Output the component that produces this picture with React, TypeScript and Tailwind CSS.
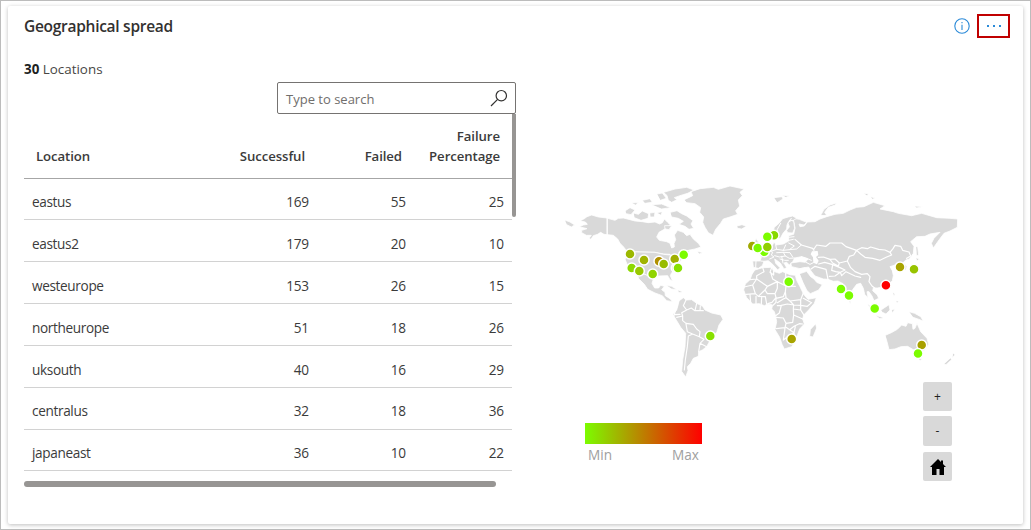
import React from "react";

type Row = { name: string; ok: number; failed: number; pct: number };

const rows: Row[] = [
  { name: "eastus", ok: 169, failed: 55, pct: 25 },
  { name: "eastus2", ok: 179, failed: 20, pct: 10 },
  { name: "westeurope", ok: 153, failed: 26, pct: 15 },
  { name: "northeurope", ok: 51, failed: 18, pct: 26 },
  { name: "uksouth", ok: 40, failed: 16, pct: 29 },
  { name: "centralus", ok: 32, failed: 18, pct: 36 },
  { name: "japaneast", ok: 36, failed: 10, pct: 22 },
];

// Map markers, painted in order: x, y, colour.
const markers: [number, number, string][] = [
  [630, 254, "#9cb800"],
  [644, 260, "#a0b400"],
  [659, 261.3, "#b09000"],
  [663.7, 264, "#98bc00"],
  [674.7, 259, "#a0b000"],
  [676.3, 268, "#e0f090"],
  [678, 268, "#88e000"],
  [683.7, 254.7, "#7cfc00"],
  [631.7, 268, "#8cd800"],
  [639.3, 271, "#98c800"],
  [652.7, 274, "#90d400"],
  [710.3, 336, "#88e000"],
  [752.3, 246, "#a0a800"],
  [764.3, 251.8, "#7cfc00"],
  [757.7, 248, "#7cf800"],
  [774, 235.3, "#88d800"],
  [767.3, 236.7, "#7cfc00"],
  [767.3, 247, "#90d000"],
  [788.7, 281.7, "#7cfc00"],
  [791.7, 339, "#a8a400"],
  [841, 289, "#7cfc00"],
  [849, 295.6, "#7cfc00"],
  [874.7, 308.6, "#7cfc00"],
  [885.9, 285.3, "#ff0000"],
  [900, 267, "#a8a400"],
  [914, 269.3, "#98c400"],
  [921.7, 345, "#a8a000"],
  [918, 353.5, "#7cfc00"],
];

function WorldMap() {
  return (
    <svg width="400" height="200" viewBox="560 180 400 200" className="block">
      <g fill="#d9d9d9" stroke="#fff" strokeWidth="2.4" strokeLinejoin="round" strokeLinecap="round">
        {/* North America */}
        <g transform="translate(555 175) scale(.33333)">
          <path d="M76 137L88 131 96 125 110 120 130 126 156 129V179L147 178 137 172 128 178 115 182 108 193 102 190 109 181 94 181 80 173 80 166 96 161 73 155 85 150 97 148 92 142Z" />
          <path d="M29 135L45 141 59 150 49 156 35 149Z" />
          <path d="M158 130L180 136 190 130 205 129 225 134 240 138 262 140 280 143 300 141 314 147 322 143 328 132 338 142 346 150 333 160 312 172 305 186 313 196 335 200 345 205 350 219 358 216 357 205 362 194 358 180 368 166 385 172 395 182 405 178 415 192 430 205 438 216 420 222 405 225 388 229 370 239 350 246 345 238 325 237 300 232 215 230 208 218 195 205 188 192 175 181 158 179Z" />
          <path d="M215 230L300 232 325 238 345 240 352 246 372 238 388 230 404 226 398 240 381 252 372 265 366 280 350 293 346 302 353 319 345 314 338 302 310 303 295 313 285 306 270 298 246 296 230 287 218 272 211 255Z" />
          <path d="M246 296L270 298 285 306 295 313 291 325 299 339 311 339 317 331 328 334 320 344 330 352 331 362 345 371 353 380 335 377 322 362 300 354 278 343 268 328 252 312Z" />
          <path d="M333 331L350 334 367 344 350 342Z M368 345L384 350 372 353Z" />
          <path d="M346 112L366 107 380 116 395 123 414 137 408 147 416 160 402 163 390 154 372 148 385 139 370 130 350 126Z" />
          <path d="M236 114L250 118 262 108 281 116 279 130 258 136 238 128Z M211 107L225 98 240 105 228 119 213 116Z" />
          <path d="M326 52L360 42 395 37 417 45 398 55 375 62 358 68 366 74 350 82 340 76 336 62Z M306 57L322 54 334 70 316 76Z" />
          <path d="M262 76L285 71 292 82 270 85Z M230 84L250 82 242 90Z M290 89L320 87 347 98 320 102Z M285 114L300 112 298 126 286 126Z M305 113L322 110 318 120Z M330 152L350 152 342 164 331 162Z" />
          <path d="M427 229L444 233 433 237Z" />
        </g>
        {/* Greenland and North Atlantic islands */}
        <g transform="translate(660 175) scale(.33333)">
          <path d="M73 74L98 62 93 50 120 41 160 37 175 43 210 33 252 42 240 52 247 62 235 75 239 93 227 107 233 118 210 126 190 132 181 146 167 163 159 181 145 173 135 157 128 142 131 126 119 112 122 98 105 86 80 83Z" />
          <path d="M231 153L246 149 259 154 245 162 233 160Z M342 68L366 65 369 72 352 83Z M366 61L390 62 378 67Z" />
        </g>
        {/* South America */}
        <g transform="translate(660 280) scale(.33333)">
          <path d="M58 62L70 53 78 60 95 59 110 70 128 79 135 90 155 99 182 105 189 118 177 135 171 155 151 180 140 200 127 210 116 215 115 229 100 235 92 250 82 260 84 272 77 291 65 274 68 240 75 200 77 160 62 142 47 117 39 103 50 90 54 76Z" />
          <path fill="none" strokeWidth="3.4" d="M78 60L70 77 80 90 65 98 68 108 50 112M80 90L94 84 104 92 130 92M110 70L105 92M121 78L120 92M68 108L68 122 78 130 100 133 110 147 120 155 118 170 132 178 120 190 140 200M78 132L82 155 98 162 118 170M98 162L85 168 82 200 76 240 73 270M120 190L116 215M52 76L42 106M45 104L60 103" />
        </g>
        {/* Europe and Asia */}
        <g transform="translate(740 175) scale(.33333)">
          <path d="M160 130L178 133 200 142 192 150 177 147 180 155 193 153 202 141 225 140 240 132 260 125 285 118 310 115 330 105 350 97 372 95 400 82 435 92 420 102 460 110 475 115 515 122 545 115 590 128 630 130 653 132 652 157 630 168 612 175 597 195 580 219 574 205 582 190 600 172 570 177 555 184 530 185 512 200 522 214 520 235 508 252 498 255 490 262 501 275 497 286 487 279 480 268 465 270 450 275 457 287 460 302 457 317 445 330 430 336 412 339 400 339 398 347 412 360 416 370 402 377 396 363 387 350 381 350 384 368 374 358 370 340 362 325 350 328 338 344 330 360 320 350 309 326 294 318 280 319 264 313 250 312 225 303 213 288 206 276 180 281 155 275 152 264 180 260 196 262 204 252 184 245 164 249 158 260 148 270 140 262 132 264 140 278 132 282 121 264 104 252 107 265 120 278 113 285 98 268 85 257 72 259 67 272 55 280 40 277 38 258 60 258 64 247 58 239 78 237 89 228 91 215 98 210 102 200 108 210 130 207 146 198 146 182 161 178 165 160Z" />
          <path d="M99 171L103 157 118 144 128 131 145 126 158 123 170 130 160 136 148 137 141 150 140 162 129 175 121 190 110 189 106 180Z M144 143L154 136 161 139 164 160 158 174 143 173 140 166 148 156Z" />
          <path d="M48 190L57 204 59 222 45 225 40 215Z M28 208L40 204 38 222 27 220Z" />
          <path d="M242 121L252 103 270 90 289 84 286 90 265 97 254 112 260 121Z" />
          <path d="M179 296L200 289 212 305 222 312 230 322 247 329 236 345 211 356 201 347 190 325Z" />
          <path stroke="none" fill="#fff" d="M216 229L233 228 235 240 228 246 236 257 231 268 220 263 219 247 212 238Z" />
          <path fill="none" strokeWidth="3.6" d="M165 193L184 210 218 220 222 226M222 222L230 210 258 214 270 204 305 204 318 215 350 226 341 240 328 244 322 258 298 264 285 252 270 253 250 246 235 247M350 226L365 218 382 221 392 216 416 223 435 225 450 232 459 221 465 211 482 214 488 226 507 231 512 243 500 250M350 226L362 237 375 247 398 250 420 256 440 246 455 240 450 232M322 258L332 278 345 290 365 298 382 296 390 305 387 320 396 333 405 340M270 253L278 264 295 273 298 264M254 262L278 269 300 278 315 285 301 292 305 302 318 290 345 303 362 307M278 269L275 286 287 290 301 292M236 267L254 262M213 282L225 274 258 283 264 313M268 304L285 303 301 292" />
          <path fill="none" strokeWidth="3" d="M122 145L112 163 114 180M154 130L148 137M90 228L98 232 94 240 102 246 89 252M107 210L110 223 95 228M110 223L130 226 137 210M130 226L148 224 163 213 146 204M110 233L130 232 136 243 118 246 104 242M136 243L148 250 164 249M130 232L150 233 158 246M148 224L170 222 184 210M146 196L160 193M146 187L162 185M120 252L134 256 145 256M125 244L129 264M48 258L47 277M62 258L72 259M184 245L200 250 214 256M198 262L210 268 220 263M180 281L196 278 204 290 215 303M185 285L178 296" />
          <path d="M528 215L533 215 536 240 530 242Z M528 248L538 252 531 258Z M327 376L333 380 330 386Z M524 93L550 95 530 99Z M370 55L385 56 382 62Z M392 65L406 69 397 73Z" />
        </g>
        {/* Africa */}
        <g transform="translate(740 235) scale(.33333)">
          <path d="M45 105L68 98 95 97 101 109 118 115 128 110 150 119 166 121 170 136 180 155 191 178 204 193 229 188 223 205 206 225 191 240 188 252 193 267 179 282 173 298 166 318 155 335 133 342 126 328 119 307 105 284 110 260 107 244 103 230 95 222 98 210 83 207 73 212 58 206 38 207 20 188 11 165 16 147 30 134 36 118Z" />
          <path d="M227 267L230 279 219 306 209 304 211 284Z" />
          <path fill="none" strokeWidth="3.6" d="M30 134L50 132 50 122 72 110 68 98M95 97L90 112 101 120 101 109M50 132L38 150 12 156M50 132L82 154 112 140 98 132 92 112M112 140L138 153 137 115M166 154L138 153 136 170M38 150L46 176 18 178M46 176L55 184 75 165 82 154M75 165L82 176 105 176 112 160 112 140M105 176L108 188 96 202 84 206M136 170L130 185 108 190M136 170L138 188 150 198 182 194 190 174M55 184L76 185 80 207M65 184L64 207M48 184L48 207M30 179L32 202M108 188L108 202 100 210M112 203L130 192 138 188M150 198L161 210 182 211 182 194M182 211L202 214 215 203 190 190M161 210L160 222 161 240 188 252M107 242L118 234 124 211 112 212M124 211L142 207 161 210M160 222L182 225 191 239M182 211L182 225M108 247L130 249 138 265 158 262 161 240M138 265L135 278 108 281M135 280L130 315M138 277L149 284 162 274 178 266 188 267M149 284L162 293 166 275M130 315L145 304 162 293 166 310" />
        </g>
        {/* Oceania and South-East Asia */}
        <g transform="translate(820 270) scale(.33333)">
          <path d="M196 196L214 188 232 178 245 165 258 169 263 158 277 161 279 178 285 175 291 160 302 185 321 205 326 223 315 241 295 246 278 238 263 229 243 230 225 237 207 239 201 215Z" />
          <path d="M267 125L284 130 302 140 310 153 291 146 279 142Z M183 120L207 104 210 120 198 132 187 127Z M142 102L154 109 168 127 158 125Z M166 136L192 143 180 146Z M215 120L225 116 218 129Z M218 66L225 72 222 80Z M228 92L236 94 231 100Z M295 264L306 266 300 272Z" />
          <path d="M399 249L405 254 397 264Z M392 264L395 269 378 284 372 282Z" />
        </g>
      </g>
      <g stroke="#fff" strokeWidth="1.5">
        {markers.map(([x, y, c]) => (
          <circle key={`${x}-${y}`} cx={x} cy={y} r="5" fill={c} />
        ))}
      </g>
    </svg>
  );
}

function LocationTable() {
  return (
    <div className="flex">
      <table className="w-[488px] table-fixed border-collapse text-[13.6px] text-[#3b3b3b]">
        <colgroup>
          <col className="w-[188px]" />
          <col className="w-[105px]" />
          <col className="w-[97px]" />
          <col className="w-[98px]" />
        </colgroup>
        <thead>
          <tr className="h-[64px] border-b border-[#a6a6a6] align-bottom text-[13.2px] leading-5 tracking-[-0.08px] [&>th]:pb-3 [&>th]:font-semibold">
            <th className="pl-3 text-left">Location</th>
            <th className="pr-3 text-right">Successful</th>
            <th className="pr-3 text-right">Failed</th>
            <th className="pr-3 text-right">
              Failure
              <br />
              Percentage
            </th>
          </tr>
        </thead>
        <tbody>
          {rows.map((r) => (
            <tr key={r.name} className="h-[41.85px] border-b border-[#d2d2d2] tracking-[-0.15px] [&>td]:pt-[7px]">
              <td className="pl-2 tracking-[-0.35px]">{r.name}</td>
              <td className="pr-2 text-right">{r.ok}</td>
              <td className="pr-2 text-right">{r.failed}</td>
              <td className="pr-2 text-right">{r.pct}</td>
            </tr>
          ))}
        </tbody>
      </table>
      <div className="h-[103px] w-1 rounded-b bg-[#979593]" />
    </div>
  );
}

export default function App() {
  return (
    <div className="h-[530px] w-[1031px] border border-[#bcbcbc] bg-white px-[7px] pt-[5px] pb-[5px] font-['Open_Sans','Noto_Sans',sans-serif]">
      <div className="flex h-[518px] flex-col rounded-[2px] bg-white px-4 shadow-[0_1px_4px_rgba(0,0,0,0.26)]">
        <header className="flex h-[41px] shrink-0 items-center justify-between">
          <h1 className="text-[15.5px] font-semibold tracking-[-0.28px] text-[#323130]">Geographical spread</h1>
          <div className="-mr-[3px] flex items-center gap-[7px] pb-0.5">
            <svg width="16" height="16" viewBox="0 0 16 16" fill="none" stroke="#2a8ad8" strokeWidth="1.1">
              <circle cx="8" cy="8" r="7.2" />
              <path d="M8 6.8V12M8 4v1.2" />
            </svg>
            <button className="flex h-6 w-[33px] items-center justify-center gap-1 border-2 border-[#c00000]">
              <i className="size-0.5 bg-[#2a8ad8]" />
              <i className="size-0.5 bg-[#2a8ad8]" />
              <i className="size-0.5 bg-[#2a8ad8]" />
            </button>
          </div>
        </header>
        <div className="flex">
          <section className="w-[492px] shrink-0">
            <div className="flex h-[35px] items-center pt-[9px] text-[13.4px] text-[#484644]">
              <p>
                <b className="text-[#201f1e]">30</b> Locations
              </p>
            </div>
            <div className="ml-[253px] flex h-8 w-[239px] items-center justify-between rounded-[2px] border border-[#757371] pr-[7px] pl-2 text-[13px] text-[#706e6c]">
              <span className="pt-[3px]">Type to search</span>
              <svg width="18" height="18" viewBox="0 0 18 18" fill="none" stroke="#323130" strokeWidth="1.2">
                <circle cx="11.3" cy="6.7" r="5.2" />
                <path d="M7.6 10.4L1 17" />
              </svg>
            </div>
            <LocationTable />
            <div className="mt-2.5 h-1.5 w-[472px] rounded-full bg-[#979593]" />
          </section>
          <section className="flex-1 pl-11">
            <div className="h-[133px]" />
            <WorldMap />
            <div className="flex items-start justify-between pr-[55px] pl-[25px]">
              <div className="mt-[43px] w-[117px]">
                <div className="h-[21px] bg-linear-to-r/srgb from-[#7cfc00] to-[#ff0000]" />
                <div className="flex justify-between pt-px pr-[3px] pl-[3px] text-[13.6px] leading-[19px] text-[#a0a0a0]">
                  <span>Min</span>
                  <span>Max</span>
                </div>
              </div>
              <div className="mt-0.5 flex flex-col gap-[5px] text-xs text-[#222]">
                <button className="flex h-[29px] w-[29px] items-center justify-center rounded-[2px] bg-[#d9d9d9]">+</button>
                <button className="flex h-[30px] w-[29px] items-center justify-center rounded-[2px] bg-[#d9d9d9]">-</button>
                <button className="mt-px flex h-[29px] w-[29px] items-center justify-center rounded-[2px] bg-[#d9d9d9]">
                  <svg width="16" height="16" viewBox="0 0 16 16">
                    <path d="M8 0L0 8h2v8h4.5v-6h3v6H14V8h2l-3-3V1.5h-2V3z" />
                  </svg>
                </button>
              </div>
            </div>
          </section>
        </div>
      </div>
    </div>
  );
}
